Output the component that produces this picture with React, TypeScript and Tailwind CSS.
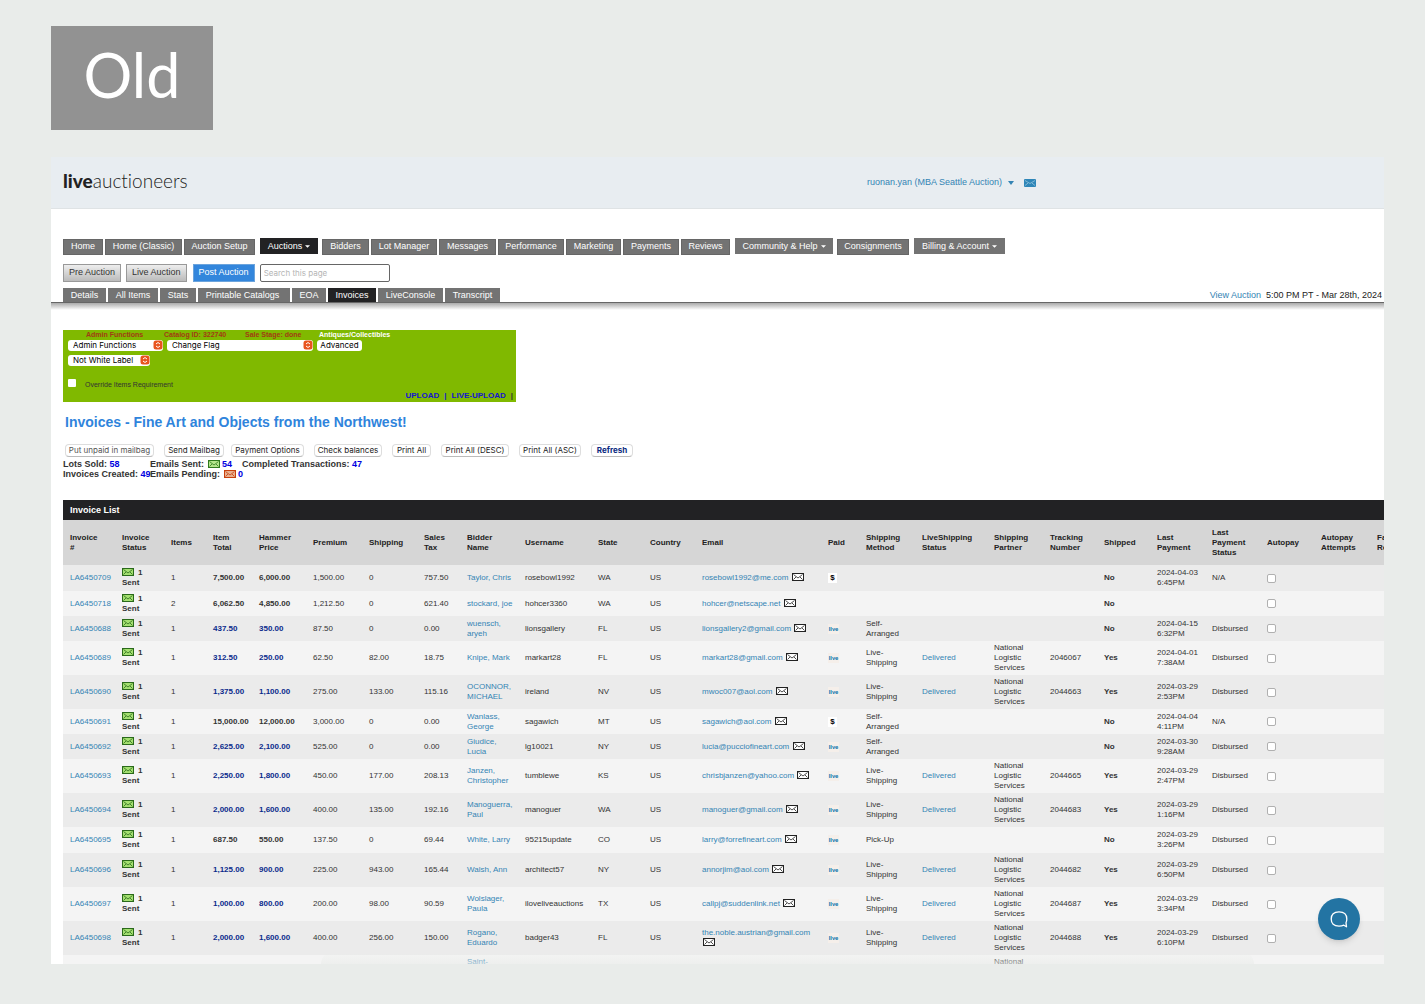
import * as React from 'react';

interface Invoice {
  id: string;
  items: string;
  total: string;
  hammer: string;
  premium: string;
  shipping: string;
  tax: string;
  bidder: string;
  username: string;
  state: string;
  email: string;
  paid: '$' | 'live' | '';
  method: string;
  delivered: boolean;
  tracking: string;
  shipped: string;
  lastPayment: string;
  status: string;
  highlight: boolean;
  height: string;
}

const row = (
  id: string,
  items: string,
  amounts: [string, string, string, string, string],
  bidder: string,
  username: string,
  state: string,
  email: string,
  paid: Invoice['paid'],
  method: string,
  tracking: string,
  lastPayment: string,
  status: string,
  highlight = true,
  height = tracking ? 'h-[34px]' : 'h-[25px]',
): Invoice => ({
  id,
  items,
  total: amounts[0],
  hammer: amounts[1],
  premium: amounts[2],
  shipping: amounts[3],
  tax: amounts[4],
  bidder,
  username,
  state,
  email,
  paid,
  method,
  delivered: tracking !== '',
  tracking,
  shipped: tracking ? 'Yes' : 'No',
  lastPayment,
  status,
  highlight,
  height,
});

const SELF = 'Self-\nArranged';
const LIVE = 'Live-\nShipping';

const invoices: Invoice[] = [
  row('LA6450709', '1', ['7,500.00', '6,000.00', '1,500.00', '0', '757.50'], 'Taylor, Chris', 'rosebowl1992', 'WA', 'rosebowl1992@me.com', '$', '', '', '2024-04-03\n6:45PM', 'N/A', false, 'h-[26px]'),
  row('LA6450718', '2', ['6,062.50', '4,850.00', '1,212.50', '0', '621.40'], 'stockard, joe', 'hohcer3360', 'WA', 'hohcer@netscape.net', '', '', '', '', '', false),
  row('LA6450688', '1', ['437.50', '350.00', '87.50', '0', '0.00'], 'wuensch,\naryeh', 'lionsgallery', 'FL', 'lionsgallery2@gmail.com', 'live', SELF, '', '2024-04-15\n6:32PM', 'Disbursed'),
  row('LA6450689', '1', ['312.50', '250.00', '62.50', '82.00', '18.75'], 'Knipe, Mark', 'markart28', 'FL', 'markart28@gmail.com', 'live', LIVE, '2046067', '2024-04-01\n7:38AM', 'Disbursed'),
  row('LA6450690', '1', ['1,375.00', '1,100.00', '275.00', '133.00', '115.16'], 'OCONNOR,\nMICHAEL', 'ireland', 'NV', 'mwoc007@aol.com', 'live', LIVE, '2044663', '2024-03-29\n2:53PM', 'Disbursed'),
  row('LA6450691', '1', ['15,000.00', '12,000.00', '3,000.00', '0', '0.00'], 'Wanlass,\nGeorge', 'sagawich', 'MT', 'sagawich@aol.com', '$', SELF, '', '2024-04-04\n4:11PM', 'N/A', false),
  row('LA6450692', '1', ['2,625.00', '2,100.00', '525.00', '0', '0.00'], 'Giudice,\nLucia', 'lg10021', 'NY', 'lucia@pucciofineart.com', 'live', SELF, '', '2024-03-30\n9:28AM', 'Disbursed'),
  row('LA6450693', '1', ['2,250.00', '1,800.00', '450.00', '177.00', '208.13'], 'Janzen,\nChristopher', 'tumblewe', 'KS', 'chrisbjanzen@yahoo.com', 'live', LIVE, '2044665', '2024-03-29\n2:47PM', 'Disbursed'),
  row('LA6450694', '1', ['2,000.00', '1,600.00', '400.00', '135.00', '192.16'], 'Manoguerra,\nPaul', 'manoguer', 'WA', 'manoguer@gmail.com', 'live', LIVE, '2044683', '2024-03-29\n1:16PM', 'Disbursed'),
  row('LA6450695', '1', ['687.50', '550.00', '137.50', '0', '69.44'], 'White, Larry', '95215update', 'CO', 'larry@forrefineart.com', 'live', 'Pick-Up', '', '2024-03-29\n3:26PM', 'Disbursed', false, 'h-[26px]'),
  row('LA6450696', '1', ['1,125.00', '900.00', '225.00', '943.00', '165.44'], 'Walsh, Ann', 'architect57', 'NY', 'annorjim@aol.com', 'live', LIVE, '2044682', '2024-03-29\n6:50PM', 'Disbursed'),
  row('LA6450697', '1', ['1,000.00', '800.00', '200.00', '98.00', '90.59'], 'Wolslager,\nPaula', 'iloveliveauctions', 'TX', 'callpj@suddenlink.net', 'live', LIVE, '2044687', '2024-03-29\n3:34PM', 'Disbursed'),
  row('LA6450698', '1', ['2,000.00', '1,600.00', '400.00', '256.00', '150.00'], 'Rogano,\nEduardo', 'badger43', 'FL', 'the.noble.austrian@gmail.com', 'live', LIVE, '2044688', '2024-03-29\n6:10PM', 'Disbursed'),
];

const columns = [
  { label: 'Invoice\n#', width: 'w-[52px]' },
  { label: 'Invoice\nStatus', width: 'w-[49px]' },
  { label: 'Items', width: 'w-[42px]' },
  { label: 'Item\nTotal', width: 'w-[46px]' },
  { label: 'Hammer\nPrice', width: 'w-[54px]' },
  { label: 'Premium', width: 'w-[56px]' },
  { label: 'Shipping', width: 'w-[55px]' },
  { label: 'Sales\nTax', width: 'w-[43px]' },
  { label: 'Bidder\nName', width: 'w-[58px]' },
  { label: 'Username', width: 'w-[73px]' },
  { label: 'State', width: 'w-[52px]' },
  { label: 'Country', width: 'w-[52px]' },
  { label: 'Email', width: 'w-[126px]' },
  { label: 'Paid', width: 'w-[38px]' },
  { label: 'Shipping\nMethod', width: 'w-[56px]' },
  { label: 'LiveShipping\nStatus', width: 'w-[72px]' },
  { label: 'Shipping\nPartner', width: 'w-[56px]' },
  { label: 'Tracking\nNumber', width: 'w-[54px]' },
  { label: 'Shipped', width: 'w-[53px]' },
  { label: 'Last\nPayment', width: 'w-[55px]' },
  { label: 'Last\nPayment\nStatus', width: 'w-[55px]' },
  { label: 'Autopay', width: 'w-[54px]' },
  { label: 'Autopay\nAttempts', width: 'w-[56px]' },
  { label: 'Failure\nReason', width: 'w-[60px]' },
];

const navItems = [
  { label: 'Home', width: 'w-10' },
  { label: 'Home (Classic)', width: 'w-[77px]' },
  { label: 'Auction Setup', width: 'w-[71px]' },
  { label: 'Auctions', width: 'w-[58px]', menu: true, active: true },
  { label: 'Bidders', width: 'w-[47px]' },
  { label: 'Lot Manager', width: 'w-[66px]' },
  { label: 'Messages', width: 'w-[57px]' },
  { label: 'Performance', width: 'w-[66px]' },
  { label: 'Marketing', width: 'w-[55px]' },
  { label: 'Payments', width: 'w-[56px]' },
  { label: 'Reviews', width: 'w-[49px]' },
  { label: 'Community & Help', width: 'w-[98px]', menu: true },
  { label: 'Consignments', width: 'w-[72px]' },
  { label: 'Billing & Account', width: 'w-[91px]', menu: true },
];

const tabs = [
  { label: 'Details', className: 'w-[43px]' },
  { label: 'All Items', className: 'w-[50px]' },
  { label: 'Stats', className: 'w-9' },
  { label: 'Printable Catalogs', className: 'w-[92px] pr-[3px]' },
  { label: 'EOA', className: 'w-[34px]' },
  { label: 'Invoices', className: 'w-12', active: true },
  { label: 'LiveConsole', className: 'w-[65px]' },
  { label: 'Transcript', className: 'w-[55px]' },
];

const actions = [
  { label: 'Put unpaid in mailbag', className: 'w-[89px] mr-[10px] text-[#555]' },
  { label: 'Send Mailbag', className: 'w-[60px] mr-[7px] text-[#222]' },
  { label: 'Payment Options', className: 'w-[73px] mr-[10px] text-[#222]' },
  { label: 'Check balances', className: 'w-[68px] mr-[10px] text-[#222]' },
  { label: 'Print All', className: 'w-[39px] mr-[10px] text-[#222]' },
  { label: 'Print All (DESC)', className: 'w-[68px] mr-[10px] text-[#222]' },
  { label: 'Print All (ASC)', className: 'w-[62px] mr-[10px] text-[#222]' },
  { label: 'Refresh', className: 'w-[42px] font-bold text-[#0a2a80]' },
];

const Envelope: React.FC<{ fill: string; stroke: string; className?: string }> = ({ fill, stroke, className = '' }) => (
  <svg viewBox="0 0 12 8" className={`inline-block h-2 w-3 align-[-1px] ${className}`} aria-hidden="true">
    <rect x="0.5" y="0.5" width="11" height="7" fill={fill} stroke={stroke} />
    <path d="M1.500 1.500l4.500 3.500 4.500-3.500M1.500 6.500l2.500-2.500M10.500 6.500L8 4" fill="none" stroke={stroke} strokeWidth="0.8" />
  </svg>
);

const Caret = () => (
  <svg viewBox="0 0 6 3" className="ml-[3px] inline-block h-[3px] w-[5px] align-[1px]" aria-hidden="true">
    <path d="M0 0h6L3 3z" fill="currentColor" />
  </svg>
);

const MiniSelect: React.FC<{ label: string; className: string }> = ({ label, className }) => (
  <span className={`relative inline-flex h-[11px] items-center rounded-[3px] bg-white ${className}`}>
    <select
      aria-label={label}
      className="h-full w-full appearance-none bg-transparent pl-[5px] font-[Inter,sans-serif] text-[8px] leading-[11px] text-black"
    >
      <option>{label}</option>
    </select>
    <svg viewBox="0 0 10 10" className="pointer-events-none absolute right-0 top-0 h-[10px] w-[10px]" aria-hidden="true">
      <rect x="0.5" y="0.5" width="9" height="9" rx="2.500" fill="#e8541e" />
      <path d="M3 4l2-1.500 2 1.500M3 6l2 1.500 2-1.500" fill="none" stroke="#fff" strokeWidth="1" />
    </svg>
  </span>
);

const Link: React.FC<{ children: React.ReactNode }> = ({ children }) => (
  <a href="#" className="text-[#3484b4]">{children}</a>
);

const PaidBadge: React.FC<{ paid: Invoice['paid'] }> = ({ paid }) => {
  if (paid === '$') {
    return <span className="inline-block h-[10px] w-[9px] bg-white text-center font-bold text-black">$</span>;
  }
  if (paid === 'live') {
    return (
      <span className="flex h-[10px] w-[11px] items-center justify-center bg-[#f5efea] font-[Lato,sans-serif] text-[6px] leading-[10px] font-black text-[#0a74ac]">
        live
      </span>
    );
  }
  return null;
};

const TopBar = () => (
  <header className="flex h-[52px] shrink-0 items-center border-b border-[#dfe3e5] bg-[#e8edf1] pl-3">
    <a href="#" className="w-[804px] pb-1 font-[Lato,sans-serif] text-[19px] leading-6 text-[#222] [font-variant-ligatures:none]">
      <span className="font-black">live</span>
      <span className="font-light">auctioneers</span>
    </a>
    <button type="button" className="flex items-center text-[9px] text-[#3484b4]">
      ruonan.yan (MBA Seattle Auction)
      <svg viewBox="0 0 6 4" className="ml-[6px] h-1 w-[6px]" aria-hidden="true">
        <path d="M0 0h6L3 4z" fill="currentColor" />
      </svg>
    </button>
    <a href="#" aria-label="Messages" className="ml-[10px]">
      <svg viewBox="0 0 12 8" className="h-2 w-3" aria-hidden="true">
        <rect width="12" height="8" rx="1" fill="#2e86b8" />
        <path d="M1 1.500l5 3 5-3M1 6.500l3-2.400M11 6.500L8 4.100" fill="none" stroke="#a5cde2" strokeWidth="0.7" />
      </svg>
    </a>
  </header>
);

const Navigation = () => (
  <>
    <nav className="mt-[29px] flex gap-[2px] pl-3 text-center text-[9px] text-white">
      {navItems.map((item) => (
        <a
          key={item.label}
          href="#"
          className={`h-4 shrink-0 whitespace-nowrap ${item.width} ${
            item.menu ? 'ml-[3px] mr-[2px] leading-4' : 'mt-px border border-[#666] leading-[13px]'
          } ${item.active ? 'bg-[#222224]' : 'bg-[#737373]'}`}
        >
          {item.label}
          {item.menu && <Caret />}
        </a>
      ))}
    </nav>
    <div className="mt-[9px] flex pl-3 text-[9px] text-[#333]">
      <button type="button" className="mr-[5px] h-[18px] border border-[#999] bg-linear-to-b from-[#eee] to-[#bbb] px-[5px]">
        Pre Auction
      </button>
      <button type="button" className="mr-[6px] h-[18px] border border-[#999] bg-linear-to-b from-[#eee] to-[#bbb] px-[5px]">
        Live Auction
      </button>
      <button type="button" className="mr-[5px] h-[18px] border border-[#6ca4dc] bg-[#3386dc] px-[5px] text-white">
        Post Auction
      </button>
      <input
        type="text"
        aria-label="Search this page"
        placeholder="Search this page"
        className="h-[18px] w-[130px] rounded-[2px] border border-[#666] px-[3px] font-[Inter,sans-serif] text-[8px] placeholder:text-[#b5b5b5]"
      />
    </div>
    <div className="mt-[6px] flex items-end border-b border-[#666] pl-3 text-[9px]">
      <div className="flex gap-[2px] text-center text-white">
        {tabs.map((tab) => (
          <a
            key={tab.label}
            href="#"
            className={`h-[14px] whitespace-nowrap leading-[14px] ${tab.className} ${tab.active ? 'bg-[#222224]' : 'bg-[#737373]'}`}
          >
            {tab.label}
          </a>
        ))}
      </div>
      <div className="ml-auto pr-[2px] leading-[14px] text-[#222]">
        <Link>View Auction</Link>
        <span className="ml-[5px]">5:00 PM PT - Mar 28th, 2024</span>
      </div>
    </div>
    <div className="h-[7px] shrink-0 bg-linear-to-b from-[#aaa] to-white" />
  </>
);

const AdminPanel = () => (
  <section className="ml-3 mt-5 h-[72px] w-[453px] shrink-0 bg-[#80b900] pl-[5px] text-[7px]">
    <div className="flex h-[10px] pl-[18px] font-bold leading-[10px] text-[#a03c14]">
      <span className="w-[78px]">Admin Functions</span>
      <span className="w-[81px]">Catalog ID: 322740</span>
      <span className="w-[74px]">Sale Stage: done</span>
      <span className="text-white">Antiques/Collectibles</span>
    </div>
    <div className="flex gap-1">
      <MiniSelect label="Admin Functions" className="w-[95px]" />
      <MiniSelect label="Change Flag" className="w-[146px]" />
      <button type="button" className="h-[11px] w-[45px] rounded-[3px] bg-white font-[Inter,sans-serif] text-[8px] leading-[11px] text-black">
        Advanced
      </button>
    </div>
    <div className="mt-1 flex">
      <MiniSelect label="Not White Label" className="w-[82px]" />
    </div>
    <label className="mt-3 flex h-[14px] items-start text-[#333]">
      <input type="checkbox" className="mr-[9px] mt-px h-2 w-2 appearance-none rounded-[1px] bg-white" />
      <span className="pt-[2px] leading-[10px]">Override Items Requirement</span>
    </label>
    <div className="flex justify-end gap-[5px] pr-[3px] text-[8px] font-bold leading-[8px] text-[#1414d2]">
      <a href="#">UPLOAD</a>
      <span>|</span>
      <a href="#">LIVE-UPLOAD</a>
      <span className="text-[#333]">|</span>
    </div>
  </section>
);

const Summary = () => (
  <>
    <h1 className="ml-[14px] mt-[11px] text-[14px] font-bold leading-[18px] text-[#2f84dc]">
      Invoices - Fine Art and Objects from the Northwest!
    </h1>
    <div className="mt-[13px] flex pl-[14px]">
      {actions.map((action) => (
        <button
          key={action.label}
          type="button"
          className={`h-[13px] shrink-0 whitespace-nowrap rounded-[4px] border border-[#ddd] border-b-[#bbb] bg-white text-center font-[Inter,sans-serif] text-[8px] leading-[11px] ${action.className}`}
        >
          {action.label}
        </button>
      ))}
    </div>
    <div className="grid w-max grid-cols-[87px_92px_auto] pl-3 pt-[2px] text-[9px] font-bold leading-[10px] whitespace-nowrap text-[#333]">
      <span>Lots Sold: <a href="#" className="text-[#0000e0]">58</a></span>
      <span>
        Emails Sent: <Envelope fill="#b4e68c" stroke="#2f7a1e" className="ml-px" /> <a href="#" className="text-[#0000e0]">54</a>
      </span>
      <span>Completed Transactions: <a href="#" className="text-[#0000e0]">47</a></span>
      <span>Invoices Created: <a href="#" className="text-[#0000e0]">49</a></span>
      <span>
        Emails Pending: <Envelope fill="#e8b090" stroke="#c8400c" className="ml-px" /> <a href="#" className="text-[#0000e0]">0</a>
      </span>
    </div>
  </>
);

const InvoiceRow: React.FC<{ invoice: Invoice; index: number }> = ({ invoice, index }) => {
  const cell = 'whitespace-pre pl-[7px]';
  const amount = `${cell} font-bold ${invoice.highlight ? 'text-[#0a2a8c]' : 'text-[#333]'}`;
  return (
    <tr className={`${invoice.height} ${index % 2 ? 'bg-[#f4f4f4]' : 'bg-[#ebebeb]'}`}>
      <td className={cell}><Link>{invoice.id}</Link></td>
      <td className={`${cell} font-bold`}>
        <Envelope fill="#a4e070" stroke="#2a6a1a" className="mr-1" />1{'\n'}Sent
      </td>
      <td className={cell}>{invoice.items}</td>
      <td className={amount}>{invoice.total}</td>
      <td className={amount}>{invoice.hammer}</td>
      <td className={cell}>{invoice.premium}</td>
      <td className={cell}>{invoice.shipping}</td>
      <td className={cell}>{invoice.tax}</td>
      <td className={cell}><Link>{invoice.bidder}</Link></td>
      <td className={cell}>{invoice.username}</td>
      <td className={cell}>{invoice.state}</td>
      <td className={cell}>US</td>
      <td className="pl-[7px] pr-1">
        <Link>{invoice.email}</Link> <Envelope fill="#fff" stroke="#222" className="ml-px" />
      </td>
      <td className={cell}><PaidBadge paid={invoice.paid} /></td>
      <td className={cell}>{invoice.method}</td>
      <td className={cell}>{invoice.delivered && <Link>Delivered</Link>}</td>
      <td className={cell}>{invoice.delivered && 'National\nLogistic\nServices'}</td>
      <td className={cell}>{invoice.tracking}</td>
      <td className={`${cell} font-bold`}>{invoice.shipped}</td>
      <td className={cell}>{invoice.lastPayment}</td>
      <td className={cell}>{invoice.status}</td>
      <td className={cell}>
        <input
          type="checkbox"
          aria-label={`Autopay ${invoice.id}`}
          className="block h-[9px] w-[9px] appearance-none rounded-[2px] border border-[#b0b0b0] bg-white"
        />
      </td>
      <td />
      <td />
    </tr>
  );
};

const InvoiceTable = () => (
  <section className="ml-3 mt-[21px]">
    <h2 className="h-5 bg-[#222224] pl-[7px] text-[9px] font-bold leading-5 text-white">Invoice List</h2>
    <table className="w-[1350px] min-w-full table-fixed border-collapse text-left text-[8px] leading-[10px] text-[#333]">
      <thead>
        <tr className="h-[45px] bg-[#d6d6d6] text-[#222]">
          {columns.map((column) => (
            <th key={column.label} scope="col" className={`whitespace-pre pl-[7px] ${column.width}`}>
              {column.label}
            </th>
          ))}
        </tr>
      </thead>
      <tbody>
        {invoices.map((invoice, index) => (
          <InvoiceRow key={invoice.id} invoice={invoice} index={index} />
        ))}
        <tr className="h-[34px] bg-[#f4f4f4] align-top">
          <td colSpan={8} />
          <td className="pl-[7px] pt-[2px]"><Link>Saint-</Link></td>
          <td colSpan={7} />
          <td className="pl-[7px] pt-[2px]">National</td>
          <td colSpan={7} />
        </tr>
      </tbody>
    </table>
  </section>
);

const ChatButton = () => (
  <button
    type="button"
    aria-label="Open chat"
    className="absolute bottom-6 right-6 flex h-[42px] w-[42px] items-center justify-center rounded-full bg-[#2374a3] shadow-md"
  >
    <svg viewBox="0 0 18 18" className="h-[18px] w-[18px]" fill="none" stroke="#fff" strokeWidth="1.3" aria-hidden="true">
      <path
        d="M13.800 15.200c-1.300.6-2.900.9-4.800.9-5.200 0-7.800-2.600-7.800-7.100S3.800 1.900 9 1.900s7.800 2.600 7.800 7.100c0 1.500-.3 2.800-.8 3.800l.5 4z"
        strokeLinejoin="round"
      />
    </svg>
  </button>
);

export default function App() {
  return (
    <div className="flex h-screen flex-col overflow-hidden bg-[#e9ecea] pb-10 pl-[51px] pr-[41px] pt-[26px] font-['Liberation_Sans',Arial,sans-serif]">
      <div className="flex h-[104px] w-[162px] shrink-0 items-center justify-center bg-[#929292] pb-2 font-[Lato,sans-serif] text-[61px] leading-none text-white">
        Old
      </div>
      <main className="relative mt-[27px] flex min-h-0 flex-1 flex-col overflow-hidden bg-white">
        <TopBar />
        <Navigation />
        <AdminPanel />
        <Summary />
        <InvoiceTable />
        <div className="pointer-events-none absolute bottom-0 left-[270px] right-[130px] h-3 rounded-t-full bg-linear-to-b from-transparent to-[#e9ecea] opacity-60" />
        <ChatButton />
      </main>
    </div>
  );
}
